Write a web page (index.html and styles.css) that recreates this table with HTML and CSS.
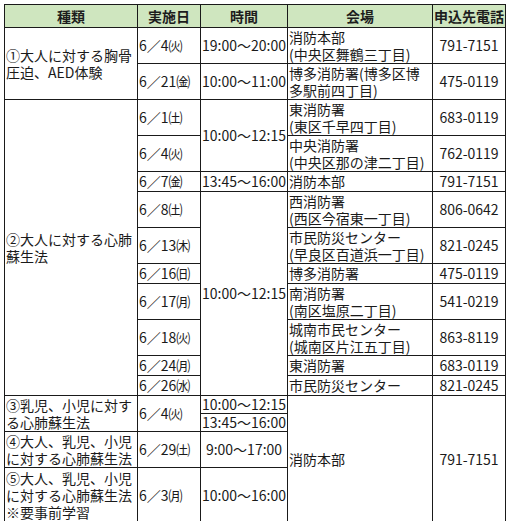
FILE: index.html
```html
<!DOCTYPE html>
<html lang="ja">
<head>
<meta charset="utf-8">
<link rel="stylesheet" href="styles.css">
</head>
<body>
<table class="sched">
  <colgroup>
    <col class="c-kind">
    <col class="c-date">
    <col class="c-time">
    <col class="c-place">
    <col class="c-tel">
  </colgroup>
  <tr class="head">
    <th>種類</th><th>実施日</th><th>時間</th><th>会場</th><th>申込先電話</th>
  </tr>
  <tr class="h2">
    <td class="kind" rowspan="2">①大人に対する胸骨<br>圧迫、AED体験</td>
    <td class="date">6／4㈫</td>
    <td class="time">19:00～20:00</td>
    <td class="place">消防本部<br>(中央区舞鶴三丁目)</td>
    <td class="tel">791-7151</td>
  </tr>
  <tr class="h2">
    <td class="date">6／21㈮</td>
    <td class="time">10:00～11:00</td>
    <td class="place">博多消防署(博多区博<br>多駅前四丁目)</td>
    <td class="tel">475-0119</td>
  </tr>
  <tr class="h2">
    <td class="kind" rowspan="10">②大人に対する心肺<br>蘇生法</td>
    <td class="date">6／1㈯</td>
    <td class="time" rowspan="2">10:00～12:15</td>
    <td class="place">東消防署<br>(東区千早四丁目)</td>
    <td class="tel">683-0119</td>
  </tr>
  <tr class="h2">
    <td class="date">6／4㈫</td>
    <td class="place">中央消防署<br>(中央区那の津二丁目)</td>
    <td class="tel">762-0119</td>
  </tr>
  <tr class="h1">
    <td class="date">6／7㈮</td>
    <td class="time">13:45～16:00</td>
    <td class="place">消防本部</td>
    <td class="tel">791-7151</td>
  </tr>
  <tr class="h2">
    <td class="date">6／8㈯</td>
    <td class="time" rowspan="7">10:00～12:15</td>
    <td class="place">西消防署<br>(西区今宿東一丁目)</td>
    <td class="tel">806-0642</td>
  </tr>
  <tr class="h2">
    <td class="date">6／13㈭</td>
    <td class="place">市民防災センター<br>(早良区百道浜一丁目)</td>
    <td class="tel">821-0245</td>
  </tr>
  <tr class="h1">
    <td class="date">6／16㈰</td>
    <td class="place">博多消防署</td>
    <td class="tel">475-0119</td>
  </tr>
  <tr class="h2">
    <td class="date">6／17㈪</td>
    <td class="place">南消防署<br>(南区塩原二丁目)</td>
    <td class="tel">541-0219</td>
  </tr>
  <tr class="h2">
    <td class="date">6／18㈫</td>
    <td class="place">城南市民センター<br>(城南区片江五丁目)</td>
    <td class="tel">863-8119</td>
  </tr>
  <tr class="h1">
    <td class="date">6／24㈪</td>
    <td class="place">東消防署</td>
    <td class="tel">683-0119</td>
  </tr>
  <tr class="h1">
    <td class="date">6／26㈬</td>
    <td class="place">市民防災センター</td>
    <td class="tel">821-0245</td>
  </tr>
  <tr class="hs">
    <td class="kind" rowspan="2">③乳児、小児に対す<br>る心肺蘇生法</td>
    <td class="date" rowspan="2">6／4㈫</td>
    <td class="time">10:00～12:15</td>
    <td class="place" rowspan="4">消防本部</td>
    <td class="tel" rowspan="4">791-7151</td>
  </tr>
  <tr class="hs">
    <td class="time">13:45～16:00</td>
  </tr>
  <tr class="h2">
    <td class="kind">④大人、乳児、小児<br>に対する心肺蘇生法</td>
    <td class="date">6／29㈯</td>
    <td class="time">9:00～17:00</td>
  </tr>
  <tr class="h3">
    <td class="kind">⑤大人、乳児、小児<br>に対する心肺蘇生法<br>※要事前学習</td>
    <td class="date">6／3㈪</td>
    <td class="time">10:00～16:00</td>
  </tr>
</table>
</body>
</html>
```

FILE: styles.css
```css
html, body {
  margin: 0;
  padding: 0;
  background: #ffffff;
}
body {
  padding: 4px 0 0 4px;
  font-family: "Noto Sans CJK JP", "Noto Sans", sans-serif;
  font-size: 14px;
  line-height: 17px;
  color: #1a1a1a;
}
.sched {
  border-collapse: collapse;
  table-layout: fixed;
  width: 501px;
}
.c-kind { width: 133px; }
.c-date { width: 63px; }
.c-time { width: 87px; }
.c-place { width: 145px; }
.c-tel { width: 73px; }

.sched th,
.sched td {
  border: 1px solid #1a1a1a;
  padding: 0 1px;
  vertical-align: middle;
  white-space: nowrap;
  overflow: hidden;
}
.sched th {
  background: #cfe6bf;
  font-weight: bold;
  text-align: center;
  color: #1d1d1d;
}
.head { height: 23px; }
.h1 { height: 20px; }
.h2 { height: 36px; }
.hs { height: 18px; }
.h3 { height: 55px; }

.kind { text-align: left; padding-left: 1px; }
.date { text-align: left; padding-left: 2px; }
.time { text-align: center; }
.place { text-align: left; padding-left: 2px; }
.tel { text-align: center; }
```
